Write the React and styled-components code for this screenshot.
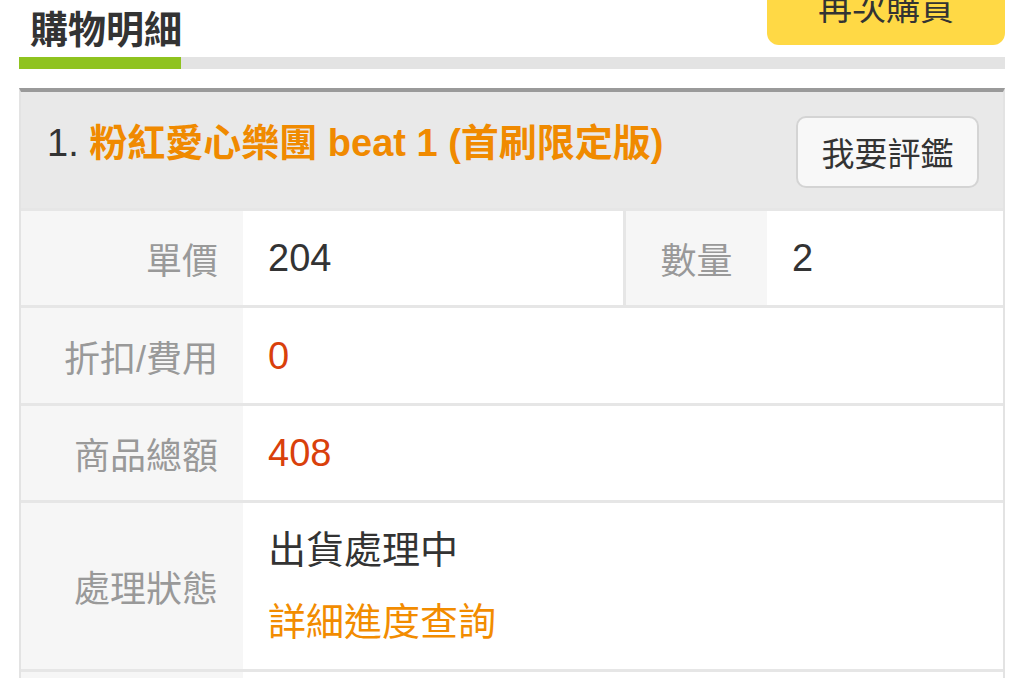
import React from 'react';
import styled, { createGlobalStyle } from 'styled-components';

const GlobalStyle = createGlobalStyle`
  html, body {
    margin: 0;
    padding: 0;
    background: #fff;
    font-family: "Liberation Sans", "Noto Sans CJK TC", sans-serif;
    color: #333;
    overflow: hidden;
  }
`;

const Page = styled.div`
  padding: 0 19px;
`;

const TopBar = styled.div`
  display: flex;
  justify-content: space-between;
  align-items: flex-start;
  height: 57px;
`;

const PageTitle = styled.h1`
  margin: 0;
  padding: 7px 0 0 11px;
  font-size: 38px;
  line-height: 46px;
  font-weight: bold;
  color: #333;
`;

const BuyAgain = styled.button`
  width: 238px;
  height: 80px;
  margin-top: -35px;
  border: none;
  border-radius: 12px;
  background: #ffd945;
  color: #333;
  font-family: inherit;
  font-size: 34px;
  cursor: pointer;
`;

const Tabs = styled.div`
  height: 12px;
  background: #e3e3e3;
`;

const ActiveTab = styled.div`
  width: 162px;
  height: 100%;
  background: #8fc31f;
`;

const Card = styled.div`
  margin-top: 19px;
  border-top: 4px solid #9a9a9a;
  border-left: 2px solid #e3e3e3;
  border-right: 2px solid #e3e3e3;
  background: #e6e6e6;
  display: flex;
  flex-direction: column;
  gap: 3px;
`;

const CardHead = styled.div`
  display: flex;
  justify-content: space-between;
  align-items: flex-start;
  background: #e9e9e9;
  padding: 24px 24px 20px 26px;
`;

const ItemName = styled.div`
  padding-top: 5px;
  font-size: 38px;
  line-height: 44px;
  color: #333;
`;

const ItemLink = styled.a`
  color: #f08a00;
  font-weight: bold;
  text-decoration: none;
`;

const ReviewButton = styled.button`
  width: 183px;
  height: 72px;
  border: 2px solid #d4d4d4;
  border-radius: 10px;
  background: #f8f8f8;
  color: #333;
  font-family: inherit;
  font-size: 33px;
  cursor: pointer;
`;

const Row = styled.div`
  display: grid;
  grid-template-columns: ${(p) => p.$cols || '222px 1fr'};
  min-height: ${(p) => p.$height || 94}px;
`;

const Label = styled.div`
  display: flex;
  align-items: center;
  justify-content: ${(p) => (p.$center ? 'center' : 'flex-end')};
  padding-right: ${(p) => (p.$center ? 0 : 25)}px;
  background: #f6f6f6;
  color: #999;
  font-size: 36px;
`;

const Value = styled.div`
  display: flex;
  flex-direction: column;
  justify-content: center;
  gap: 22px;
  padding: 22px 25px;
  background: #fff;
  color: ${(p) => (p.$tone === 'price' ? '#d9400b' : '#333')};
  font-size: 38px;
  line-height: 50px;
`;

const Pair = styled.div`
  display: grid;
  grid-template-columns: 141px 1fr;
  border-left: 3px solid #e6e6e6;
`;

const TrackLink = styled.a`
  color: #f28c00;
  text-decoration: none;
`;

export default function App() {
  return (
    <>
      <GlobalStyle />
      <Page>
        <TopBar>
          <PageTitle>購物明細</PageTitle>
          <BuyAgain>再次購買</BuyAgain>
        </TopBar>
        <Tabs>
          <ActiveTab />
        </Tabs>

        <Card>
          <CardHead>
            <ItemName>
              1. <ItemLink href="#">粉紅愛心樂團 beat 1 (首刷限定版)</ItemLink>
            </ItemName>
            <ReviewButton>我要評鑑</ReviewButton>
          </CardHead>

          <Row $cols="222px 380px 1fr">
            <Label>單價</Label>
            <Value>204</Value>
            <Pair>
              <Label $center>數量</Label>
              <Value>2</Value>
            </Pair>
          </Row>
          <Row $height={95}>
            <Label>折扣/費用</Label>
            <Value $tone="price">0</Value>
          </Row>
          <Row>
            <Label>商品總額</Label>
            <Value $tone="price">408</Value>
          </Row>
          <Row $height={165}>
            <Label>處理狀態</Label>
            <Value>
              <div>出貨處理中</div>
              <TrackLink href="#">詳細進度查詢</TrackLink>
            </Value>
          </Row>
          <Row>
            <Label />
            <Value />
          </Row>
        </Card>
      </Page>
    </>
  );
}
